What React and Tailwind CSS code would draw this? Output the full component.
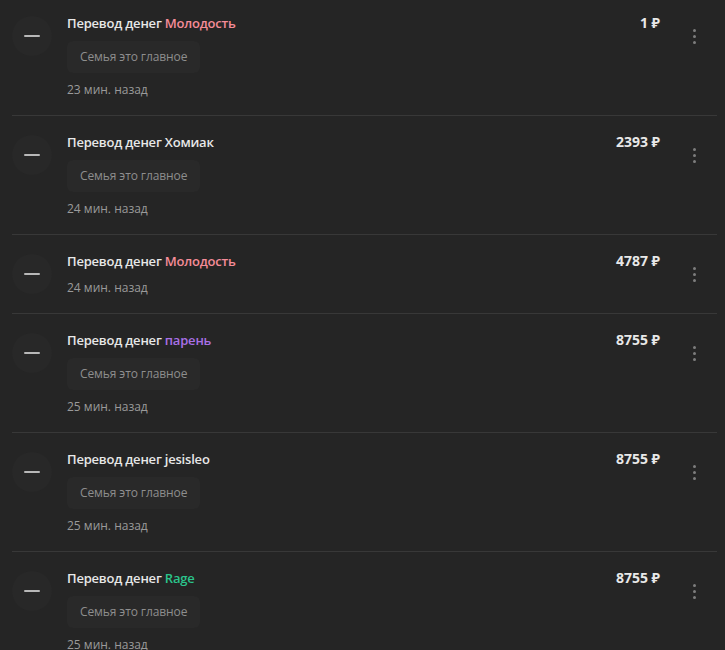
import React from "react";

const items = [
  { name: "Молодость", color: "text-[#f58c98]", amount: "1", tag: true, time: "23 мин. назад" },
  { name: "Хомиак", color: "text-[#e8e8e8]", amount: "2393", tag: true, time: "24 мин. назад" },
  { name: "Молодость", color: "text-[#f58c98]", amount: "4787", tag: false, time: "24 мин. назад" },
  { name: "парень", color: "text-[#a970e6]", amount: "8755", tag: true, time: "25 мин. назад" },
  { name: "jesisleo", color: "text-[#e8e8e8]", amount: "8755", tag: true, time: "25 мин. назад" },
  { name: "Rage", color: "text-[#2bc48c]", amount: "8755", tag: true, time: "25 мин. назад" },
];

function Row({ item }) {
  return (
    <div className="flex ml-3 mr-2 pt-[17px] pb-[17px] border-b border-[#383838]">
      {/* icon */}
      <div className="mt-[2px] w-10 h-10 shrink-0 rounded-full bg-[#282828] flex items-center justify-center">
        <div className="w-4 h-[2px] bg-[#b8b8b8] rounded-sm" />
      </div>

      {/* text */}
      <div className="ml-[15px] flex-1 min-w-0">
        <div className="text-[13px] leading-[18px] font-semibold tracking-[-0.2px] text-[#e8e8e8]">
          Перевод денег <span className={item.color}>{item.name}</span>
        </div>
        {item.tag && (
          <div className="mt-[9px] inline-flex items-center h-8 px-[13px] rounded-md bg-[#292929] text-[12px] tracking-[-0.1px] text-[#8e8e8e]">
            Семья это главное
          </div>
        )}
        <div className={(item.tag ? "mt-[9px]" : "mt-[10px]") + " text-[12px] leading-4 text-[#9a9a9a]"}>
          {item.time}
        </div>
      </div>

      {/* amount */}
      <div className="text-[14px] leading-[18px] font-bold text-[#e8e8e8] whitespace-nowrap">
        {item.amount} ₽
      </div>

      {/* menu */}
      <div className="ml-[18px] mr-[7px] mt-[2px] w-8 h-10 flex flex-col items-center justify-center gap-[3px]">
        <span className="w-[3px] h-[3px] rounded-full bg-[#7d7d7d]" />
        <span className="w-[3px] h-[3px] rounded-full bg-[#7d7d7d]" />
        <span className="w-[3px] h-[3px] rounded-full bg-[#7d7d7d]" />
      </div>
    </div>
  );
}

export default function App() {
  return (
    <div
      className="w-[725px] h-[650px] overflow-hidden bg-[#252525]"
      style={{ fontFamily: '"Open Sans", "Noto Sans", sans-serif' }}
    >
      <div className="-mt-[3px]">
        {items.map((it, i) => (
          <Row key={i} item={it} />
        ))}
      </div>
    </div>
  );
}
